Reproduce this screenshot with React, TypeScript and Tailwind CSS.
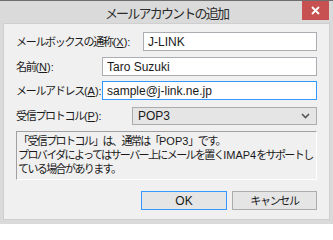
import { ReactNode } from 'react';

const font = { fontFamily: '"Noto Sans CJK JP", "Liberation Sans", sans-serif' };
const latin = { fontFamily: '"Liberation Sans", "Noto Sans CJK JP", sans-serif' };

function Key({ k }: { k: string }) {
    return (
        <span className="tracking-normal" style={latin}>
            (<span className="underline underline-offset-1">{k}</span>):
        </span>
    );
}

function Lat({ children }: { children: ReactNode }) {
    return (
        <span className="tracking-normal" style={latin}>
            {children}
        </span>
    );
}

function Row({ label, children, className }: { label: ReactNode; children: ReactNode; className?: string }) {
    return (
        <div className={`flex h-[19px] items-center ${className ?? ''}`}>
            <span className="whitespace-nowrap tracking-[-1.3px]">{label}</span>
            <div className="ml-auto shrink-0">{children}</div>
        </div>
    );
}

export default function App() {
    return (
        <div
            className="flex h-[224px] w-[333px] flex-col overflow-hidden border-t border-[#6e6e6e] bg-[#dadada] text-[11px] leading-none text-[#1a1a1a]"
            style={font}
        >
            <div className="relative flex h-[22px] items-center justify-center">
                <span className="text-[13px] tracking-[-1.8px] text-[#2b2b2b]">メールアカウントの追加</span>
                <button className="absolute right-[4px] top-0 flex h-[19px] w-[27px] items-center justify-center bg-[#c75050] text-white">
                    <svg width="9" height="9" viewBox="0 0 9 9">
                        <path d="M1 1L8 8M8 1L1 8" stroke="white" strokeWidth="1.8" />
                    </svg>
                </button>
            </div>
            <div className="mx-[3px] mb-[4px] flex flex-1 flex-col border border-[#cfcfcf] bg-[#f0f0f0] px-[12px] pt-[8px]">
                <Row label={<>メールボックスの通称<Key k="X" /></>}>
                    <input
                        readOnly
                        value="J-LINK"
                        className="h-[19px] w-[174px] border border-[#abadb3] bg-white px-[4px] text-[12px] outline-none"
                        style={latin}
                    />
                </Row>
                <Row label={<>名前<Key k="N" /></>} className="mt-[6px]">
                    <input
                        readOnly
                        value="Taro Suzuki"
                        className="h-[19px] w-[215px] border border-[#abadb3] bg-white px-[4px] text-[12px] outline-none"
                        style={latin}
                    />
                </Row>
                <Row label={<>メールアドレス<Key k="A" /></>} className="mt-[5px]">
                    <input
                        readOnly
                        value="sample@j-link.ne.jp"
                        className="h-[19px] w-[215px] border border-[#3399ff] bg-white px-[4px] text-[12px] outline-none"
                        style={latin}
                    />
                </Row>
                <Row label={<>受信プロトコル<Key k="P" /></>} className="mt-[6px]">
                    <div className="flex h-[18px] w-[185px] items-center border border-[#acacac] bg-[#e5e5e5] pl-[5px] pr-[6px]">
                        <span className="text-[12px]" style={latin}>POP3</span>
                        <svg className="ml-auto" width="9" height="6" viewBox="0 0 9 6">
                            <path d="M1 1L4.5 4.5L8 1" stroke="#555" strokeWidth="1.6" fill="none" />
                        </svg>
                    </div>
                </Row>
                <div className="mt-[6px] h-[49px] overflow-hidden whitespace-nowrap border border-b-white border-l-[#a0a0a0] border-r-white border-t-[#a0a0a0] pl-[1px] pt-[2px] leading-[13px] tracking-[-1.6px]">
                    「受信プロトコル」は、通常は「<Lat>POP3</Lat>」です。
                    <br />
                    プロバイダによってはサーバー上にメールを置く<Lat>IMAP4</Lat>をサポートし
                    <br />
                    ている場合があります。
                </div>
                <div className="mt-[11px] flex justify-end gap-[5px]">
                    <button className="h-[19px] w-[86px] border border-[#3399ff] bg-[#e5e5e5] text-[12px]" style={latin}>OK</button>
                    <button className="h-[19px] w-[85px] border border-[#acacac] bg-[#e5e5e5] tracking-[-1.3px]">キャンセル</button>
                </div>
            </div>
        </div>
    );
}
